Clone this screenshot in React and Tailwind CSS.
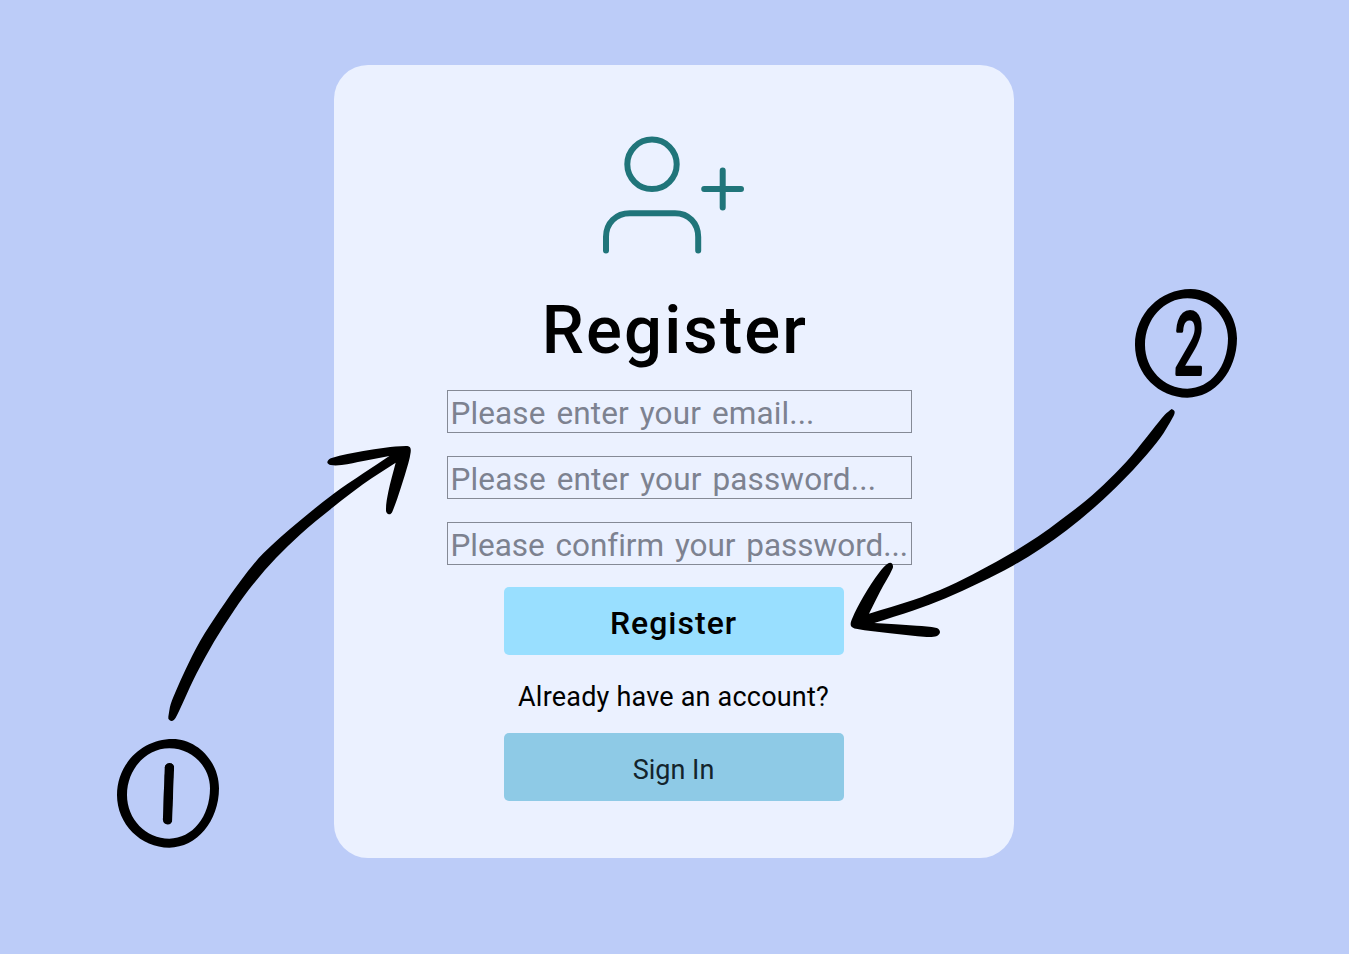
function UserPlusIcon() {
  return (
    <svg
      className="mr-[2px] h-[122px] w-[146px]"
      viewBox="0 0 146 122"
      fill="none"
      stroke="#20757a"
      strokeWidth="6"
      strokeLinecap="round"
      strokeLinejoin="round"
    >
      <circle cx="52" cy="30.3" r="24.7" />
      <path d="M6 116.500V103C6 89 16 79.300 30 79.300H75C88.500 79.300 98.200 89 98.200 103V116.500" />
      <path d="M122.700 36.500V73.500M104.200 55H141" />
    </svg>
  );
}

const fields = [
  { type: "email", placeholder: "Please enter your email...", spacing: "tracking-[0.12px]" },
  { type: "password", placeholder: "Please enter your password...", spacing: "tracking-[0.15px]" },
  { type: "password", placeholder: "Please confirm your password...", spacing: "tracking-[-0.02px]" },
];

const ring =
  "M218 57C290 57 357 123 357 205C357 303 290 383 208 383C122 383 51 312 51 225C51 132 126 57 218 57Z M208 85C138 85 81 148 81 225C81 298 138 356 208 356C277 356 330 290 330 205C330 139 275 85 208 85Z";

// Each arrow outline is a list of smooth runs that meet at sharp corners.
const leftArrow = [
  [[55, 890], [62, 853], [80, 808], [105, 752], [150, 664], [210, 570], [272, 482], [340, 400], [445, 306], [549, 223], [640, 160], [718, 108]],
  [[718, 108], [640, 123], [575, 135], [542, 135], [532, 126], [545, 114], [640, 93], [705, 83], [768, 78], [780, 82], [782, 97], [775, 130], [752, 205], [727, 275], [717, 283], [708, 272], [715, 215], [737, 128]],
  [[737, 128], [640, 192], [549, 262], [450, 344], [378, 414], [310, 492], [253, 570], [192, 665], [140, 760], [100, 845], [77, 893], [66, 903], [56, 898], [55, 890]],
];

const rightArrow = [
  [[1171.7, 409], [1174.6, 411.5], [1173, 417], [1160, 438.3], [1142, 460], [1123.3, 480], [1096, 506], [1067, 530], [1041, 548.5], [1013.3, 565.5], [980, 582.5], [945, 598.5], [913.3, 610.5], [874.3, 623]],
  [[874.3, 623], [916.7, 625.7], [936.7, 628], [940, 632], [937, 636], [926.7, 637], [890, 633.3], [856, 628.7], [851, 626], [852, 619], [863.3, 596.7], [880, 571.5], [888.3, 563.3], [892, 563.5], [892.7, 568.3], [880, 591.7], [869, 613.7]],
  [[869, 613.7], [913.3, 600], [948, 586.5], [980, 570.5], [1013.3, 552], [1038, 536.5], [1060, 520.5], [1086, 500.5], [1109, 479.5], [1131, 456.5], [1152.3, 430], [1165, 414.5], [1171.7, 409]],
];

function outline(runs) {
  let d = `M${runs[0][0].join(" ")}`;
  for (const p of runs) {
    for (let i = 0; i < p.length - 1; i++) {
      const a = p[Math.max(i - 1, 0)];
      const b = p[i];
      const c = p[i + 1];
      const e = p[Math.min(i + 2, p.length - 1)];
      const chord = Math.hypot(c[0] - b[0], c[1] - b[1]) / 3;
      const l1 = Math.hypot(c[0] - a[0], c[1] - a[1]) || 1;
      const l2 = Math.hypot(e[0] - b[0], e[1] - b[1]) || 1;
      d += `C${b[0] + ((c[0] - a[0]) / l1) * chord} ${b[1] + ((c[1] - a[1]) / l1) * chord}`;
      d += ` ${c[0] - ((e[0] - b[0]) / l2) * chord} ${c[1] - ((e[1] - b[1]) / l2) * chord} ${c[0]} ${c[1]}`;
    }
  }
  return `${d}Z`;
}

function Annotations() {
  return (
    <svg className="pointer-events-none absolute inset-0 h-[954px] w-[1349px]" viewBox="0 0 1349 954" fill="#000">
      <defs>
        <clipPath id="stem">
          <rect x="163.800" y="763" width="9.600" height="61.500" rx="4.800" transform="rotate(2 168.500 794)" />
        </clipPath>
      </defs>
      <path transform="translate(150 420) scale(.33333)" d={outline(leftArrow)} />
      <path d={outline(rightArrow)} />
      <path fillRule="evenodd" transform="translate(100 720) scale(.33333)" d={ring} />
      <path fillRule="evenodd" transform="translate(1118 270) scale(.33333)" d={ring} />
      <g clipPath="url(#stem)">
        <text
          transform="rotate(2 168.500 794) translate(164.500 823.500) scale(.85 1)"
          textAnchor="middle"
          stroke="#000"
          strokeWidth="4"
          strokeLinejoin="round"
          className="font-['Roboto',sans-serif] text-[85px] font-semibold"
        >
          1
        </text>
      </g>
      <text
        transform="translate(1188 374) skewX(-2) scale(.6 1)"
        textAnchor="middle"
        stroke="#000"
        strokeWidth="4"
        strokeLinejoin="round"
        className="font-['Roboto',sans-serif] text-[86px] font-normal"
      >
        2
      </text>
    </svg>
  );
}

export default function App() {
  return (
    <main className="relative flex h-[954px] w-[1349px] items-start justify-center overflow-hidden bg-[#bcccf8] pt-[65px] pr-[2px] font-['Roboto',sans-serif] text-black">
      <section className="flex h-[793px] w-[680px] flex-col items-center rounded-[34px] bg-[#ebf1ff] pt-[69px]">
        <UserPlusIcon />
        <h1 className="mt-[33px] h-[101px] pl-[3px] text-[67px] leading-[82px] font-medium tracking-[2.1px]">
          Register
        </h1>
        <form className="flex flex-col items-center">
          <div className="ml-[11px] flex flex-col gap-[23px]">
            {fields.map((field) => (
              <input
                key={field.placeholder}
                type={field.type}
                placeholder={field.placeholder}
                className={`h-[43px] w-[465px] border border-[#858a96] bg-transparent pt-[5px] pr-0 pl-[3px] text-[31.500px] [word-spacing:3px] placeholder:text-[#7d8290] ${field.spacing}`}
              />
            ))}
          </div>
          <button
            type="button"
            className="mt-[22px] h-[68px] w-[340px] rounded-[5px] bg-[#99dfff] pt-[4px] text-[32px] font-medium tracking-[1px]"
          >
            Register
          </button>
          <p className="mt-[22px] text-[27px] leading-[40px] tracking-[0.2px]">Already have an account?</p>
          <button
            type="button"
            className="mt-[16px] h-[68px] w-[340px] rounded-[5px] bg-[#8ecae6] pt-[6px] text-[27px] text-[#13242c]"
          >
            Sign In
          </button>
        </form>
      </section>
      <Annotations />
    </main>
  );
}
